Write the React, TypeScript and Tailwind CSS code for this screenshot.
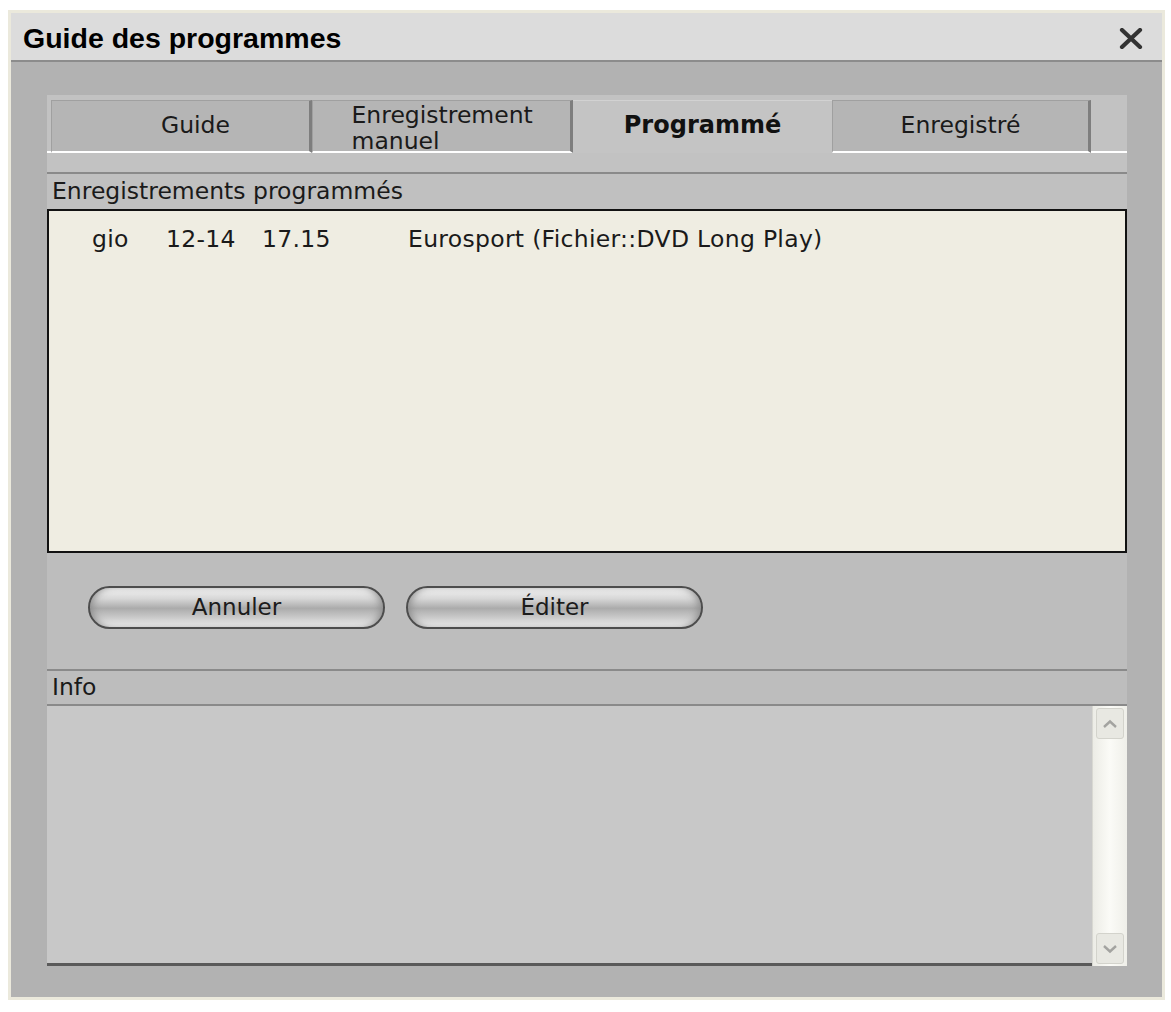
import { useState } from "react";

type Tab = {
  id: string;
  label: string;
  width: string;
};

const tabs: Tab[] = [
  { id: "guide", label: "Guide", width: "w-[261px]" },
  { id: "manuel", label: "Enregistrement manuel", width: "w-[261px]" },
  { id: "programme", label: "Programmé", width: "w-[259px]" },
  { id: "enregistre", label: "Enregistré", width: "w-[259px]" },
];

const recordings = [
  { day: "gio", date: "12-14", time: "17.15", channel: "Eurosport (Fichier::DVD Long Play)" },
];

const PillButton = ({ label }: { label: string }) => (
  <button
    type="button"
    className="w-[297px] h-[43px] rounded-full border-2 border-[#4d4d4d] bg-[linear-gradient(to_bottom,#f4f4f4_0%,#d6d6d6_28%,#ababab_52%,#cdcdcd_78%,#f2f2f2_100%)] text-[23px] leading-none text-[#1c1c1c] shadow-[inset_6px_0_8px_-4px_#8a8a8a,inset_-6px_0_8px_-4px_#8a8a8a]"
  >
    {label}
  </button>
);

const App = () => {
  const [activeTab, setActiveTab] = useState<string>("programme");

  return (
    <div className="w-[1171px] h-[1012px] bg-white pt-[10px] pl-[8px] font-['DejaVu_Sans',sans-serif] text-[#1a1a1a]">
      <div className="w-[1157px] h-[990px] border-[3px] border-[#ebe9dc] bg-[#b2b2b2] flex flex-col">
        {/* barre de titre */}
        <div className="h-[49px] shrink-0 bg-[#dcdcdc] border-b-2 border-[#8c8c8c] flex items-center justify-between pl-[12px] pr-[19px]">
          <span className="font-['Liberation_Sans',Arial,sans-serif] font-bold text-[28.5px] leading-none text-black pt-[3px]">
            Guide des programmes
          </span>
          <svg width="24" height="21" viewBox="0 0 24 21" className="mt-[4px]">
            <path d="M3 2 L21 19 M21 2 L3 19" stroke="#333" strokeWidth="4.2" strokeLinecap="round" />
          </svg>
        </div>

        <div className="flex-1 pt-[33px] pl-[36px]">
          <div className="w-[1080px] flex flex-col">
            {/* onglets */}
            <div className="bg-[#c2c2c2] pt-[5px]">
              <div className="flex items-end h-[53px]">
                <div className="w-[4px] self-stretch border-b-2 border-white" />
                {tabs.map((tab) => {
                  const active = tab.id === activeTab;
                  if (active) {
                    return (
                      <div
                        key={tab.id}
                        onClick={() => setActiveTab(tab.id)}
                        className={`${tab.width} h-[53px] bg-[#c4c4c4] border-t border-[#d2d2d2] flex items-center justify-center font-bold text-[24px] text-[#111] cursor-pointer pb-[4px]`}
                      >
                        {tab.label}
                      </div>
                    );
                  }
                  const twoLines = tab.id === "manuel";
                  return (
                    <div
                      key={tab.id}
                      onClick={() => setActiveTab(tab.id)}
                      className={`${tab.width} h-[53px] bg-[#b5b5b5] border-t border-l border-[#a0a0a0] border-r-[3px] border-r-[#7e7e7e] border-b-2 border-b-white flex justify-center cursor-pointer ${twoLines ? "items-start" : "items-center"} ${tab.id === "guide" ? "pl-[30px]" : ""}`}
                    >
                      {twoLines ? (
                        <span className="inline-block text-left text-[23.5px] leading-[26px] w-[184px] pl-[2px] pt-[1px]">
                          Enregistrement
                          <br />
                          manuel
                        </span>
                      ) : (
                        <span className="text-[23.5px] leading-none">{tab.label}</span>
                      )}
                    </div>
                  );
                })}
                <div className="flex-1 self-stretch border-b-2 border-white" />
              </div>
              <div className="h-[19px]" />
            </div>

            {/* enregistrements */}
            <div className="bg-[#c0c0c0] border-t-2 border-[#8a8a8a] h-[37px] flex items-center pl-[5px] text-[23.5px] leading-none">
              Enregistrements programmés
            </div>
            <div className="h-[344px] bg-[#efede2] border-2 border-[#121212] pt-[14px]">
              {recordings.map((r) => (
                <div key={r.time} className="flex items-center h-[30px] pl-[43px] text-[23.5px] leading-none tracking-[0.3px]">
                  <span className="w-[74px]">{r.day}</span>
                  <span className="w-[96px]">{r.date}</span>
                  <span className="w-[146px]">{r.time}</span>
                  <span>{r.channel}</span>
                </div>
              ))}
            </div>

            {/* boutons */}
            <div className="h-[116px] bg-[#bdbdbd] flex items-start gap-[21px] pl-[41px] pt-[33px]">
              <PillButton label="Annuler" />
              <PillButton label="Éditer" />
            </div>

            {/* info */}
            <div className="bg-[#bdbdbd] border-t-2 border-b-2 border-[#8a8a8a] h-[37px] flex items-center pl-[5px] text-[23.5px] leading-none">
              Info
            </div>
            <div className="h-[260px] flex">
              <div className="flex-1 bg-[#c8c8c8] border-b-[3px] border-[#5a5a5a]" />
              <div className="w-[35px] bg-[linear-gradient(to_right,#ecece6,#fbfbf7,#efefe9)] border-l border-[#d8d8d2] flex flex-col justify-between py-[2px] px-[3px]">
                <div className="h-[31px] rounded-[3px] bg-[#e8e8e2] border border-[#d3d3cc] flex items-center justify-center">
                  <svg width="16" height="10" viewBox="0 0 16 10">
                    <path d="M2 8 L8 2.5 L14 8" fill="none" stroke="#a3a3a0" strokeWidth="2.4" />
                  </svg>
                </div>
                <div className="h-[31px] rounded-[3px] bg-[#e8e8e2] border border-[#d3d3cc] flex items-center justify-center">
                  <svg width="16" height="10" viewBox="0 0 16 10">
                    <path d="M2 2 L8 7.5 L14 2" fill="none" stroke="#a3a3a0" strokeWidth="2.4" />
                  </svg>
                </div>
              </div>
            </div>
          </div>
        </div>
      </div>
    </div>
  );
};

export default App;
